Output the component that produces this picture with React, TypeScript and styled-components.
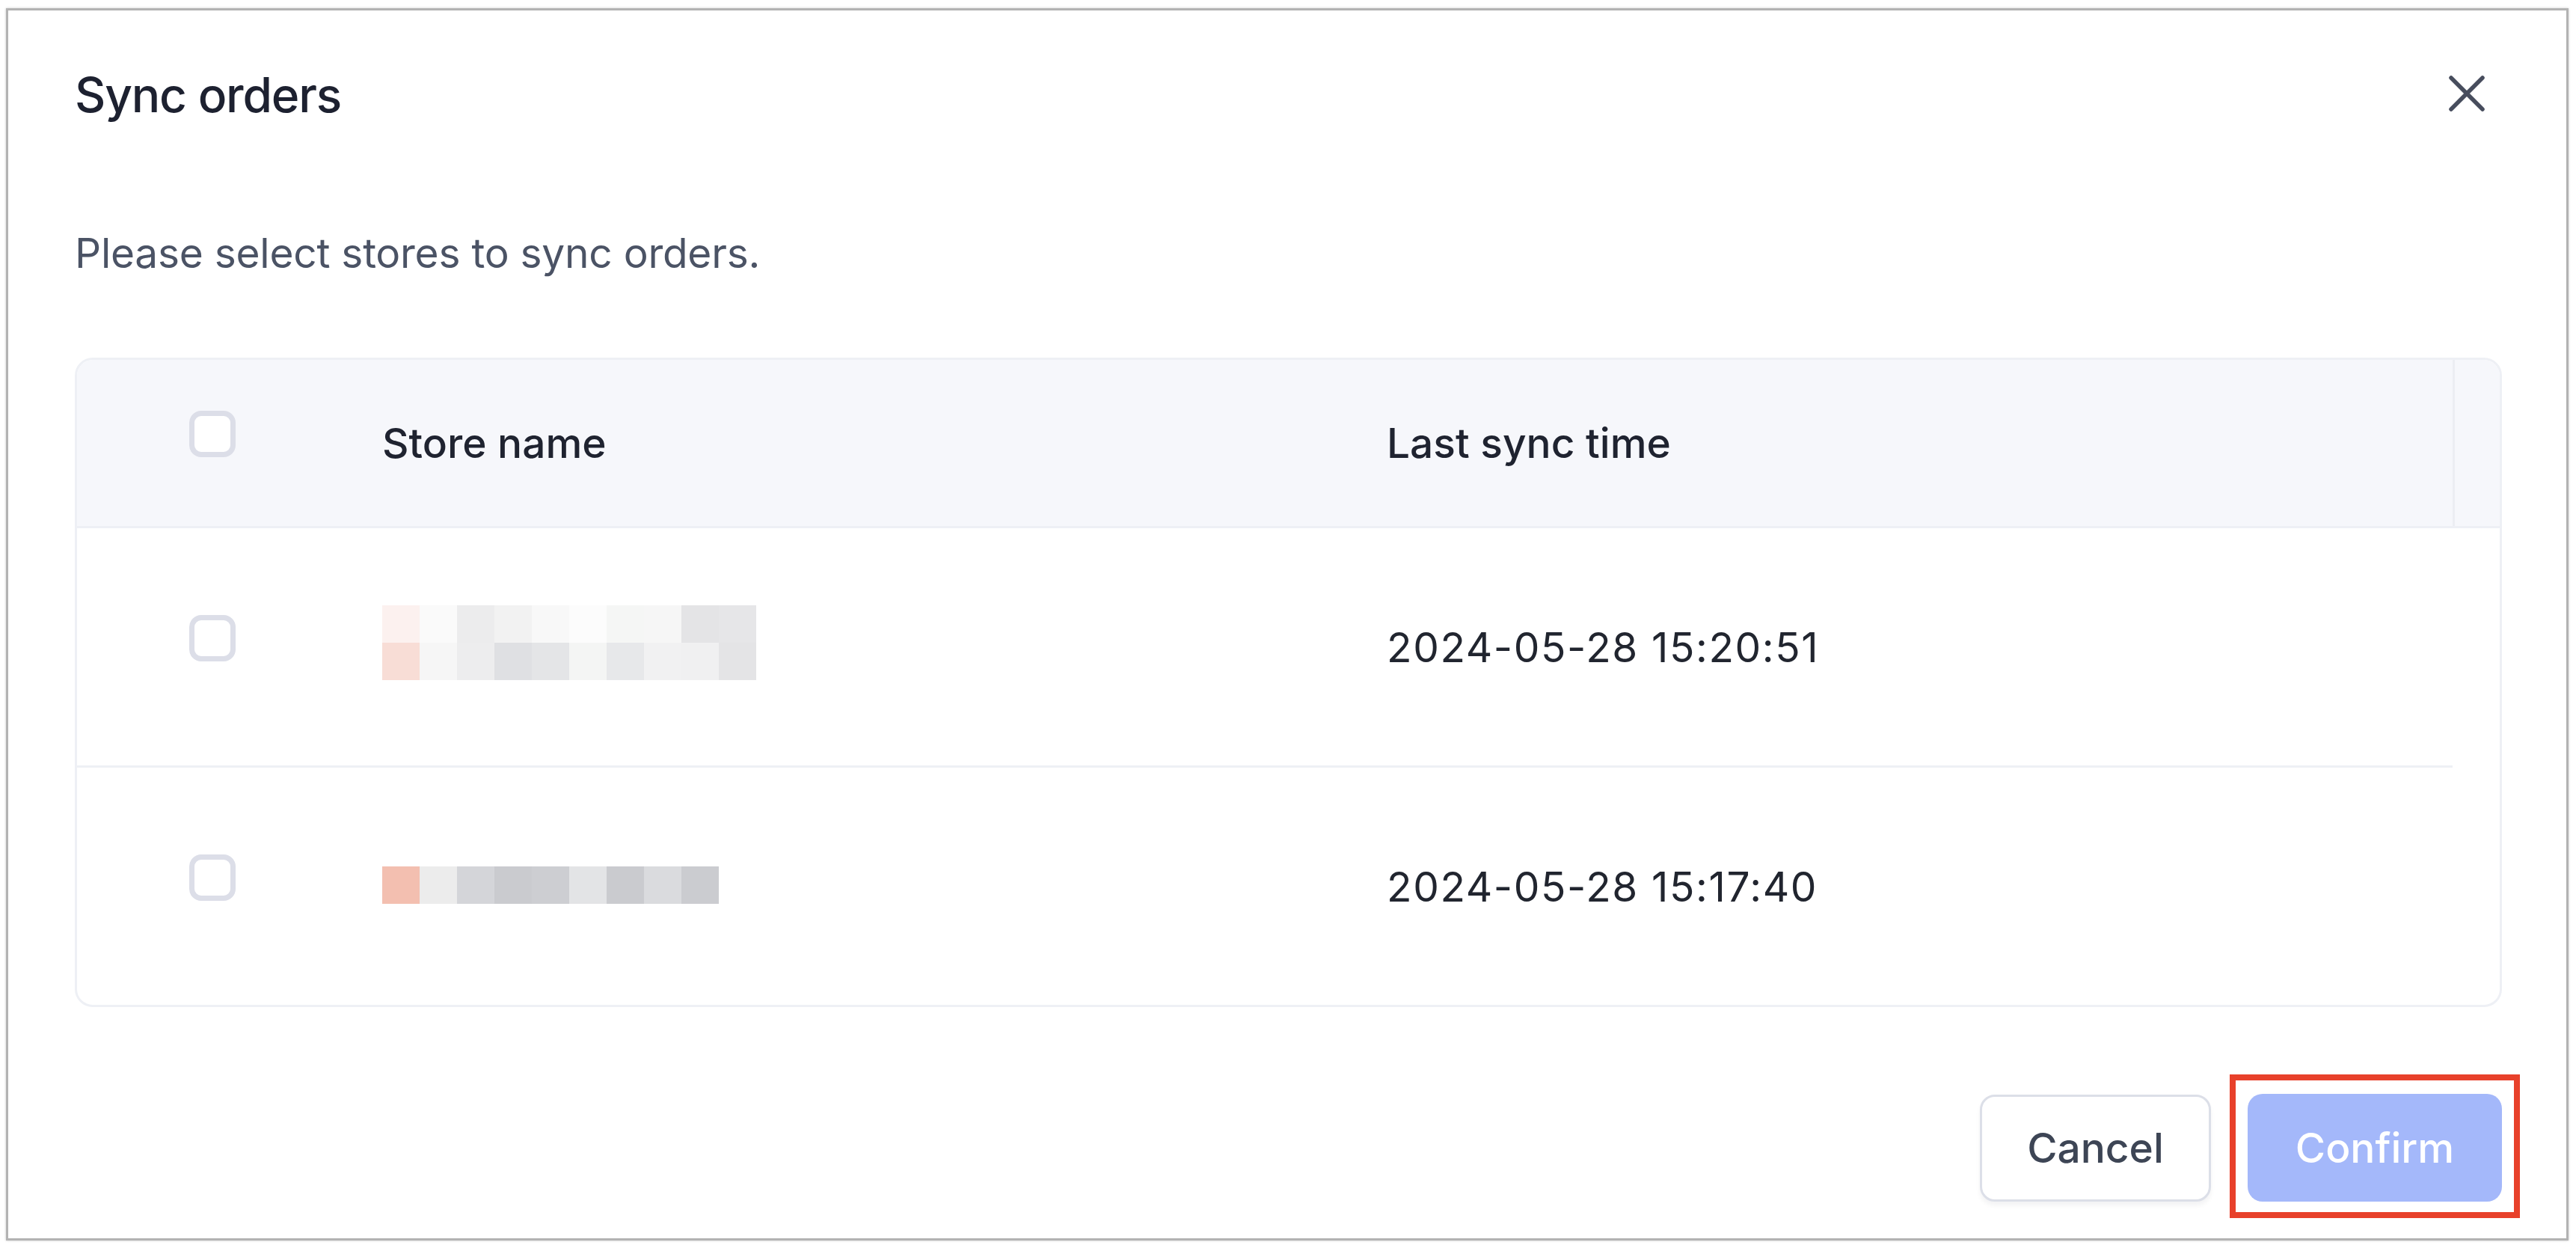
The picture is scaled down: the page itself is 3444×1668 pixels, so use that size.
import React from "react";
import styled, { createGlobalStyle } from "styled-components";

const GlobalStyle = createGlobalStyle`
  html, body {
    margin: 0;
    padding: 0;
    background: #ffffff;
  }
  body {
    font-family: Inter, "Noto Sans", "Liberation Sans", sans-serif;
    -webkit-font-smoothing: antialiased;
  }
  *, *::before, *::after {
    box-sizing: border-box;
  }
`;

const Page = styled.div`
  width: 3444px;
  height: 1668px;
  padding: 11px 10px 10px 8px;
  background: #ffffff;
`;

const Frame = styled.div`
  width: 100%;
  height: 100%;
  border: 3px solid #b3b3b3;
  box-shadow: 0 0 3px rgba(0, 0, 0, 0.22);
  background: #ffffff;
  display: flex;
  flex-direction: column;
  padding: 73px 86px 49px 89px;
`;

const DialogHeader = styled.div`
  display: flex;
  align-items: center;
  justify-content: space-between;
  height: 80px;
`;

const Title = styled.h2`
  margin: 0;
  font-size: 64px;
  line-height: 80px;
  font-weight: 500;
  letter-spacing: -1.2px;
  color: #1d2130;
`;

const CloseButton = styled.button`
  width: 50px;
  height: 50px;
  margin: -4px 22px 0 0;
  padding: 0;
  border: none;
  background: transparent;
  display: flex;
  align-items: center;
  justify-content: center;
  cursor: pointer;
`;

const Subtitle = styled.p`
  margin: 131px 0 0;
  font-size: 55px;
  line-height: 80px;
  font-weight: 400;
  letter-spacing: -0.25px;
  color: #4b5365;
`;

const Table = styled.div`
  margin-top: 100px;
  border: 3px solid #eef0f5;
  border-radius: 24px;
  overflow: hidden;
  background: #ffffff;
`;

const HeaderRow = styled.div`
  display: grid;
  grid-template-columns: 408px 1343px 1fr 63px;
  height: 225px;
  background: #f6f7fb;
  border-bottom: 3px solid #eef0f5;
`;

const BodyRow = styled.div<{ $last?: boolean }>`
  display: grid;
  grid-template-columns: 408px 1343px 1fr;
  height: ${(p) => (p.$last ? "317px" : "320px")};
  margin-right: 63px;
  border-bottom: ${(p) => (p.$last ? "none" : "3px solid #eef0f5")};
`;

const Cell = styled.div`
  display: flex;
  align-items: center;
  min-width: 0;
`;

const Gutter = styled.div`
  border-left: 3px solid #eceef3;
`;

const HeadText = styled.span`
  font-size: 55px;
  line-height: 80px;
  font-weight: 500;
  color: #1f2330;
  white-space: nowrap;
`;

const CellText = styled.span`
  font-size: 55px;
  line-height: 80px;
  font-weight: 400;
  letter-spacing: 1.6px;
  color: #21252f;
  white-space: nowrap;
`;

const Checkbox = styled.span`
  display: block;
  width: 62px;
  height: 62px;
  margin: 0 0 24px 150px;
  border: 7px solid #dcdee8;
  border-radius: 16px;
  background: #ffffff;
`;

const Pixelated = styled.div<{ $lift?: number }>`
  display: flex;
  flex-direction: column;
  margin-bottom: ${(p) => p.$lift ?? 0}px;
`;

const PixelLine = styled.div`
  display: flex;
`;

const Pixel = styled.span`
  display: block;
  width: 50px;
  height: 50px;
`;

const Footer = styled.div`
  margin-top: auto;
  display: flex;
  justify-content: flex-end;
  align-items: center;
  gap: 49px;
`;

const CancelButton = styled.button`
  width: 309px;
  height: 143px;
  border: 3px solid #dcdfe8;
  border-radius: 20px;
  background: #ffffff;
  box-shadow: 0 5px 6px rgba(16, 24, 40, 0.05);
  font-family: inherit;
  font-size: 55px;
  font-weight: 500;
  color: #3d4555;
  padding: 0;
  cursor: pointer;
`;

const ConfirmWrap = styled.div`
  position: relative;
`;

const ConfirmButton = styled.button`
  display: block;
  width: 340px;
  height: 144px;
  border: none;
  border-radius: 20px;
  background: #a4b8fa;
  font-family: inherit;
  font-size: 55px;
  font-weight: 500;
  color: #ffffff;
  padding: 0;
  cursor: not-allowed;
`;

const Highlight = styled.span`
  position: absolute;
  top: -26px;
  left: -24px;
  right: -24px;
  bottom: -22px;
  border: 8px solid #e8412b;
  pointer-events: none;
`;

type Store = {
  pixels: string[][];
  lift: number;
  time: string;
};

const stores: Store[] = [
  {
    pixels: [
      ["#fcf1ef", "#fafafa", "#ececed", "#f2f2f2", "#f8f8f8", "#fcfcfc", "#f5f6f5", "#f6f6f6", "#e4e4e6", "#e6e6e8"],
      ["#f8ddd6", "#f6f6f6", "#ededee", "#dfe0e3", "#e4e5e7", "#f4f5f4", "#e7e8ea", "#f1f1f2", "#f0f0f1", "#e4e4e6"],
    ],
    lift: 12,
    time: "2024-05-28 15:20:51",
  },
  {
    pixels: [["#f3bfb0", "#ececec", "#d4d5d9", "#cacbcf", "#cdced2", "#e3e4e6", "#cacbcf", "#dadbde", "#cbccd0"]],
    lift: 4,
    time: "2024-05-28 15:17:40",
  },
];

const CloseIcon = () => (
  <svg width="50" height="50" viewBox="0 0 50 50" fill="none">
    <path d="M4 4L46 46M46 4L4 46" stroke="#474d5d" strokeWidth="5.5" strokeLinecap="round" />
  </svg>
);

export default function App() {
  return (
    <>
      <GlobalStyle />
      <Page>
        <Frame>
          <DialogHeader>
            <Title>Sync orders</Title>
            <CloseButton aria-label="Close">
              <CloseIcon />
            </CloseButton>
          </DialogHeader>
          <Subtitle>Please select stores to sync orders.</Subtitle>
          <Table>
            <HeaderRow>
              <Cell>
                <Checkbox />
              </Cell>
              <Cell>
                <HeadText>Store name</HeadText>
              </Cell>
              <Cell>
                <HeadText>Last sync time</HeadText>
              </Cell>
              <Gutter />
            </HeaderRow>
            {stores.map((s, i) => (
              <BodyRow key={s.time} $last={i === stores.length - 1}>
                <Cell>
                  <Checkbox />
                </Cell>
                <Cell>
                  <Pixelated $lift={s.lift}>
                    {s.pixels.map((line, li) => (
                      <PixelLine key={li}>
                        {line.map((c, ci) => (
                          <Pixel key={ci} style={{ background: c }} />
                        ))}
                      </PixelLine>
                    ))}
                  </Pixelated>
                </Cell>
                <Cell>
                  <CellText>{s.time}</CellText>
                </Cell>
              </BodyRow>
            ))}
          </Table>
          <Footer>
            <CancelButton>Cancel</CancelButton>
            <ConfirmWrap>
              <ConfirmButton disabled>Confirm</ConfirmButton>
              <Highlight />
            </ConfirmWrap>
          </Footer>
        </Frame>
      </Page>
    </>
  );
}
